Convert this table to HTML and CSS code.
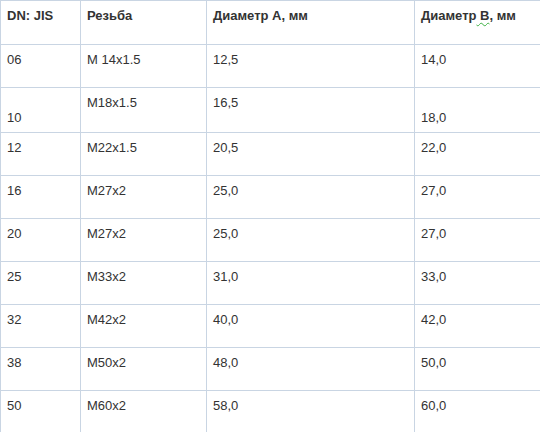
FILE: index.html
```
<!DOCTYPE html>
<html lang="ru">
<head>
<meta charset="utf-8">
<link rel="stylesheet" href="styles.css">
</head>
<body>
<table class="spec">
  <colgroup>
    <col class="c1"><col class="c2"><col class="c3"><col class="c4">
  </colgroup>
  <tr class="head">
    <th>DN: JIS</th>
    <th>Резьба</th>
    <th>Диаметр А, мм</th>
    <th>Диаметр<span class="spell"> В</span>, мм</th>
  </tr>
  <tr><td>06</td><td>M 14x1.5</td><td>12,5</td><td>14,0</td></tr>
  <tr><td><br>10</td><td>M18x1.5</td><td>16,5</td><td><br>18,0</td></tr>
  <tr><td>12</td><td>M22x1.5</td><td>20,5</td><td>22,0</td></tr>
  <tr><td>16</td><td>M27x2</td><td>25,0</td><td>27,0</td></tr>
  <tr><td>20</td><td>M27x2</td><td>25,0</td><td>27,0</td></tr>
  <tr><td>25</td><td>M33x2</td><td>31,0</td><td>33,0</td></tr>
  <tr><td>32</td><td>M42x2</td><td>40,0</td><td>42,0</td></tr>
  <tr><td>38</td><td>M50x2</td><td>48,0</td><td>50,0</td></tr>
  <tr><td>50</td><td>M60x2</td><td>58,0</td><td>60,0</td></tr>
</table>
</body>
</html>
```
FILE: styles.css
```
html, body {
  margin: 0;
  padding: 0;
  background: #ffffff;
}
.spec {
  border-collapse: collapse;
  table-layout: fixed;
  width: 540px;
  font-family: "Liberation Sans", Arial, sans-serif;
  font-size: 13px;
  line-height: 15px;
  color: #333333;
}
.c1 { width: 80px; }
.c2 { width: 126px; }
.c3 { width: 208px; }
.c4 { width: 126px; }
.spec th,
.spec td {
  border: 1px solid #c9d5e3;
  padding: 7px 6px;
  vertical-align: top;
  text-align: left;
}
.spec th {
  font-weight: bold;
}
.spec tr {
  height: 43px;
}
.spec tr.head {
  height: 44px;
}
.spell {
  text-decoration: underline wavy #3cb043;
  text-decoration-thickness: 1px;
  text-underline-offset: 2px;
}
```
